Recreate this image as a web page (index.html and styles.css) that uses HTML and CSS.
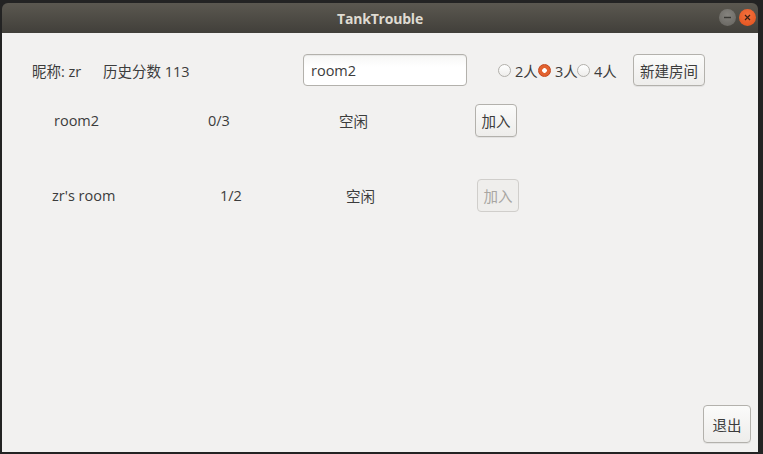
FILE: index.html
```html
<!DOCTYPE html>
<html lang="zh">
<head>
<meta charset="utf-8">
<title>TankTrouble</title>
<link rel="stylesheet" href="styles.css">
</head>
<body>
<div class="window">
  <div class="titlebar">
    <span class="title">TankTrouble</span>
    <div class="controls">
      <span class="ctl ctl-min"><svg width="17" height="17" viewBox="0 0 17 17"><line x1="5" y1="8.5" x2="12" y2="8.5" stroke="#3a3935" stroke-width="1.4"/></svg></span>
      <span class="ctl ctl-close"><svg width="17" height="17" viewBox="0 0 17 17"><path d="M6 6 L11 11 M11 6 L6 11" stroke="#3a2015" stroke-width="1.2" fill="none"/></svg></span>
    </div>
  </div>
  <div class="content">
    <div class="toprow">
      <span class="nick">昵称: zr</span>
      <span class="score">历史分数 113</span>
      <div class="inputcell"><div class="input">room2</div></div>
      <div class="radios">
        <label class="radio"><span class="dot"></span><span>2人</span></label>
        <label class="radio"><span class="dot checked"></span><span>3人</span></label>
        <label class="radio"><span class="dot"></span><span>4人</span></label>
      </div>
      <button class="btn btn-new">新建房间</button>
    </div>
    <div class="room room-a">
      <span class="name">room2</span>
      <span class="count">0/3</span>
      <span class="state">空闲</span>
      <button class="btn btn-join">加入</button>
    </div>
    <div class="room room-b">
      <span class="name">zr's room</span>
      <span class="count">1/2</span>
      <span class="state">空闲</span>
      <button class="btn btn-join" disabled>加入</button>
    </div>
    <button class="btn btn-exit">退出</button>
  </div>
</div>
</body>
</html>
```

FILE: styles.css
```css
* { box-sizing: border-box; }
html, body { margin: 0; padding: 0; }
body {
  width: 763px;
  height: 454px;
  background: #232323;
  overflow: hidden;
  font-family: "Open Sans", "Noto Sans CJK SC", sans-serif;
  font-size: 14.5px;
  color: #3c3c3c;
}
.window {
  margin: 3px 0 0 2px;
  width: 756px;
  height: 449px;
  display: flex;
  flex-direction: column;
}
.titlebar {
  height: 30px;
  border-radius: 6px 6px 0 0;
  background: linear-gradient(#5b5850, #413f3a);
  display: flex;
  align-items: center;
  justify-content: center;
  position: relative;
}
.title {
  font-family: "Open Sans", sans-serif;
  font-weight: 700;
  font-size: 14px;
  color: #dfdbd2;
  letter-spacing: -0.2px;
}
.controls {
  position: absolute;
  right: 2px;
  top: 6px;
  display: flex;
  gap: 3px;
}
.ctl {
  width: 17px;
  height: 17px;
  border-radius: 50%;
  display: flex;
  align-items: center;
  justify-content: center;
}
.ctl-min { background: radial-gradient(circle at 50% 35%, #85837e, #65635e); }
.ctl-close { background: radial-gradient(circle at 50% 35%, #f4703d, #e0501b); }

.content {
  flex: 1;
  background: #f2f1f0;
  display: flex;
  flex-direction: column;
  padding: 21px 6px 9px 0;
}
.toprow {
  display: grid;
  grid-template-columns: 71px 200px 195px 135px 72px;
  align-items: center;
  height: 32px;
  padding-left: 30px;
  white-space: nowrap;
}
.input {
  width: 164px;
  height: 32px;
  border: 1px solid #b3b1ac;
  border-radius: 4px;
  background: linear-gradient(#f6f6f5, #ffffff 40%);
  box-shadow: inset 0 1px 1px rgba(0,0,0,0.06);
  padding-left: 7px;
  display: flex;
  align-items: center;
  color: #3c3c3c;
}
.radios { display: flex; align-items: center; }
.radio {
  display: flex;
  align-items: center;
  gap: 4px;
  width: 40px;
  flex: none;
  white-space: nowrap;
}
.radio:nth-child(2) { width: 39px; }
.dot {
  width: 13px;
  height: 13px;
  border-radius: 50%;
  border: 1px solid #b2b0ab;
  background: linear-gradient(#ffffff, #eeedeb);
  flex: none;
}
.dot.checked {
  border-color: #c4461b;
  background: radial-gradient(circle, #ffffff 0 2px, #e2622f 2.6px);
}
.btn {
  font-family: "Open Sans", "Noto Sans CJK SC", sans-serif;
  font-size: 14.5px;
  color: #3c3c3c;
  border: 1px solid #b3b1ac;
  border-radius: 4px;
  background: linear-gradient(#fbfbfa, #eeedeb);
  box-shadow: 0 1px 0 rgba(0,0,0,0.06);
  padding: 0;
  display: flex;
  align-items: center;
  justify-content: center;
  white-space: nowrap;
}
.btn-new { width: 72px; height: 32px; }
.btn-join { width: 42px; height: 33px; }
.btn:disabled {
  color: #a8a6a2;
  border-color: #d0cecb;
  background: #efeeec;
  box-shadow: none;
}
.room {
  display: grid;
  align-items: center;
  height: 33px;
  white-space: nowrap;
}
.room-a {
  margin-top: 18px;
  padding-left: 52px;
  grid-template-columns: 154px 131px 136px 42px;
}
.room-b {
  margin-top: 42px;
  padding-left: 50px;
  grid-template-columns: 168px 126px 131px 42px;
}
.btn-exit {
  margin-top: auto;
  align-self: flex-end;
  margin-right: 1px;
  width: 48px;
  height: 38px;
}
```
